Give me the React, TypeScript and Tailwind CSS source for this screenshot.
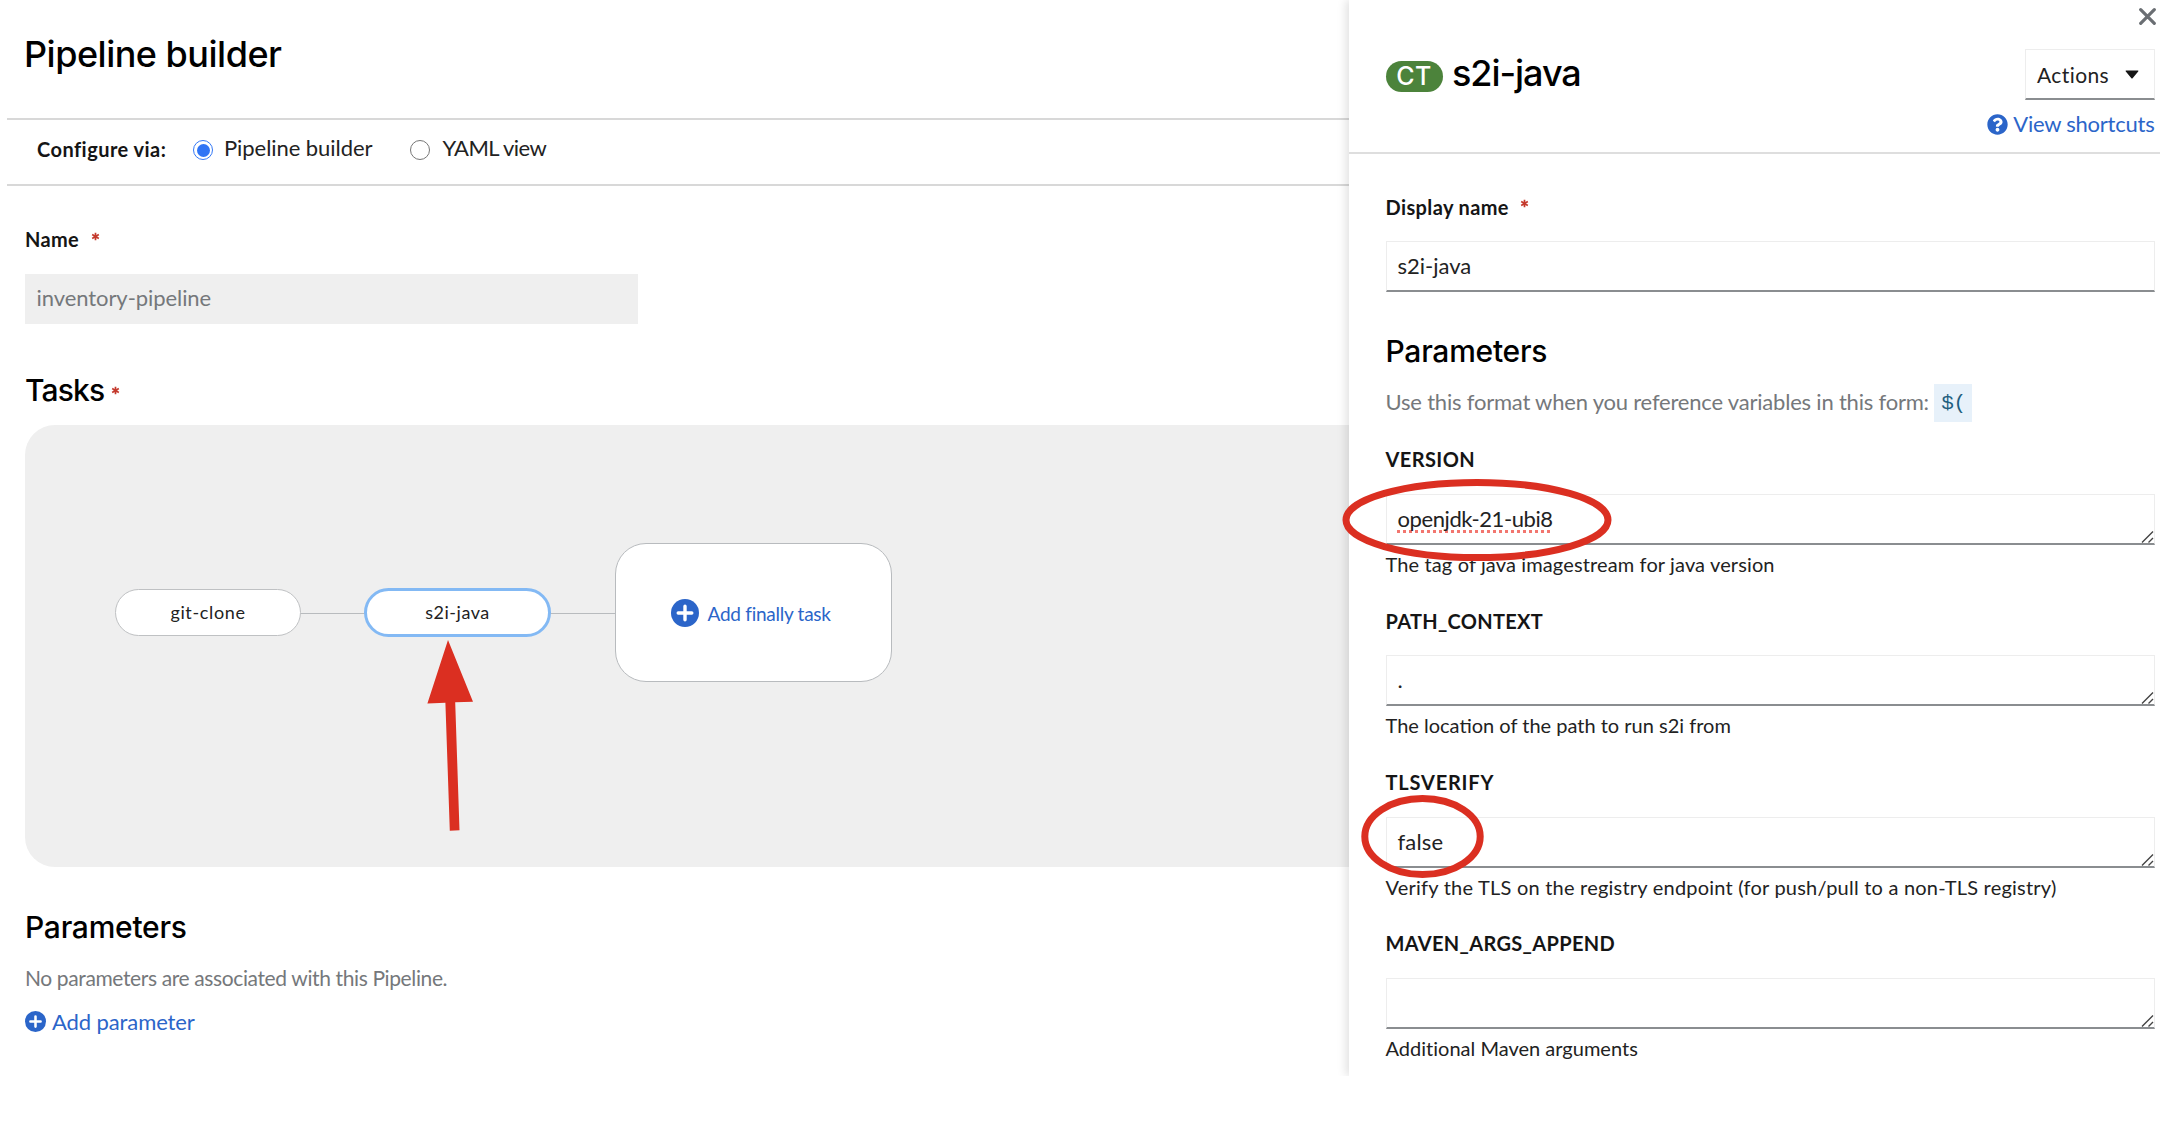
import React from 'react';

const PlusCircle = ({ className }: { className: string }) => (
  <svg viewBox="0 0 28 28" className={className}>
    <circle cx="14" cy="14" r="14" fill="#2b65c9" />
    <path d="M14 7.2v13.6M7.2 14h13.6" stroke="#fff" strokeWidth="3.4" strokeLinecap="round" />
  </svg>
);

const QuestionCircle = ({ className }: { className: string }) => (
  <svg viewBox="0 0 512 512" className={className}>
    <path
      fill="#2b65c9"
      d="M504 256c0 136.997-111.043 248-248 248S8 392.997 8 256C8 119.083 119.043 8 256 8s248 111.083 248 248zM262.655 90c-54.497 0-89.255 22.957-116.549 63.758-3.536 5.286-2.353 12.415 2.715 16.258l34.699 26.31c5.205 3.947 12.621 3.008 16.665-2.122 17.864-22.658 30.113-35.797 57.303-35.797 20.429 0 45.698 13.148 45.698 32.958 0 14.976-12.363 22.667-32.534 33.976C247.128 238.528 216 254.941 216 296v4c0 6.627 5.373 12 12 12h56c6.627 0 12-5.373 12-12v-1.333c0-28.462 83.186-29.647 83.186-106.667 0-58.002-60.165-102-116.531-102zM256 338c-25.365 0-46 20.635-46 46 0 25.364 20.635 46 46 46s46-20.636 46-46c0-25.365-20.635-46-46-46z"
    />
  </svg>
);

const Required = ({ className }: { className: string }) => (
  <svg viewBox="0 0 10 10" className={className}>
    <path d="M5 0.8v8.4M1.3 2.9l7.4 4.2M8.7 2.9l-7.4 4.2" stroke="#c4392c" strokeWidth="1.9" />
  </svg>
);

const ResizeHandle = () => (
  <svg viewBox="0 0 13 13" className="absolute right-0 bottom-0 h-[13px] w-[13px]">
    <path d="M1 12.5L12 1.5M7.5 12.5L12 8" stroke="#444" strokeWidth="1.4" />
  </svg>
);

type FieldProps = {
  label: string;
  labelClass: string;
  value: React.ReactNode;
  help: string;
  helpClass: string;
};

const Field = ({ label, labelClass, value, help, helpClass }: FieldProps) => (
  <div className="h-[161.33px]">
    <div className={`text-[20px] leading-6 font-bold text-[#151515] ${labelClass}`}>{label}</div>
    <div className="relative mt-[22.5px] flex h-[51px] items-center border border-b-2 border-[#ededed] border-b-[#8a8d90] pl-[11px] text-[22px] leading-7 text-[#222]">
      {value}
      <ResizeHandle />
    </div>
    <div className={`mt-[7px] text-[20px] leading-6 text-[#222] ${helpClass}`}>{help}</div>
  </div>
);

export default function App() {
  return (
    <div className="relative flex h-[1142px] w-[2160px] items-start overflow-hidden bg-white font-['Lato',sans-serif] whitespace-nowrap text-[#222]">
      <main className="flex h-[1076px] w-[1349px] flex-col pl-[6.5px]">
        <header className="h-[120px] border-b-2 border-[#d8d8d8] pt-[34px] pl-[17.5px]">
          <h1 className="font-['Inter',sans-serif] text-[36px] leading-10 font-medium tracking-[-0.5px] text-black">
            Pipeline builder
          </h1>
        </header>
        <div className="flex h-[66px] items-start border-b-2 border-[#d8d8d8] pt-[14px] pl-[30.5px]">
          <span className="mt-[1px] w-[156px] text-[20px] leading-7 font-bold tracking-[0.46px] text-[#151515]">
            Configure via:
          </span>
          <span className="mt-[6px] flex h-5 w-5 items-center justify-center rounded-full border-[1.5px] border-[#3478f6] bg-white">
            <span className="h-[13px] w-[13px] rounded-full bg-[#2f74f5]" />
          </span>
          <span className="ml-[11px] text-[22px] leading-7 tracking-[-0.06px]">Pipeline builder</span>
          <span className="mt-[6px] ml-[37.5px] h-5 w-5 rounded-full border-[1.5px] border-[#767676] bg-white" />
          <span className="ml-[12.5px] text-[22px] leading-7 tracking-[-0.55px]">YAML view</span>
        </div>

        <div className="pl-[18.5px]">
          <div className="mt-[41px] flex h-6">
            <span className="text-[20px] leading-6 font-bold tracking-[0.32px] text-[#151515]">Name</span>
            <Required className="mt-[4.5px] ml-[11.5px] h-[9px] w-[9px]" />
          </div>
          <div className="mt-[22.5px] flex h-[50px] w-[613px] items-center bg-[#efefef] pl-[11.5px] text-[22px] leading-7 tracking-[-0.07px] text-[#75787b]">
            <span className="-mt-[1px]">inventory-pipeline</span>
          </div>

          <div className="mt-[48.5px] flex h-9">
            <h2 className="font-['Inter',sans-serif] text-[30px] leading-9 font-medium tracking-[-0.84px] text-black">
              Tasks
            </h2>
            <Required className="mt-[14px] ml-[6.5px] h-[9px] w-[9px]" />
          </div>

          <div className="relative mt-[17px] h-[442px] rounded-l-[30px] bg-[#efefef]">
            <div className="absolute top-[187.5px] left-[275px] h-[1.5px] w-[66px] bg-[#b8bbbe]" />
            <div className="absolute top-[187.5px] left-[525px] h-[1.5px] w-[66px] bg-[#b8bbbe]" />
            <div className="absolute top-[164px] left-[90px] flex h-[47px] w-[186px] items-center justify-center rounded-full border-[1.5px] border-[#bfc1c3] bg-white pb-[1px] text-[18px] tracking-[0.64px]">
              git-clone
            </div>
            <div className="absolute top-[163px] left-[339px] flex h-[49px] w-[187px] items-center justify-center rounded-full border-[3px] border-[#83b9f4] bg-white pb-[1px] text-[18px] tracking-[0.51px]">
              s2i-java
            </div>
            <div className="absolute top-[118px] left-[590px] flex h-[139px] w-[277px] items-center justify-start rounded-[31px] border-[1.5px] border-[#b8bbbe] bg-white pl-[54.5px]">
              <PlusCircle className="h-7 w-7" />
              <span className="mt-[3px] ml-[9px] text-[19px] leading-6 tracking-[-0.26px] text-[#2b65c9]">
                Add finally task
              </span>
            </div>
          </div>

          <h2 className="mt-[42px] font-['Inter',sans-serif] text-[30px] leading-9 font-medium tracking-[-0.25px] text-black">
            Parameters
          </h2>
          <p className="mt-[19px] text-[21px] leading-7 tracking-[-0.38px] text-[#75787b]">
            No parameters are associated with this Pipeline.
          </p>
          <div className="mt-[16px] flex h-7 items-center text-[#2b65c9]">
            <PlusCircle className="mb-[2px] h-[21px] w-[21px]" />
            <span className="ml-[6px] text-[22px] leading-7 tracking-[-0.1px]">Add parameter</span>
          </div>
        </div>
      </main>

      <aside className="h-[1076px] w-[811px] bg-white shadow-[-3px_0_9px_rgba(0,0,0,0.12)] [clip-path:inset(0_0_0_-20px)]">
        <div className="flex h-[154px] justify-between border-b-2 border-[#dedede] pr-[5.5px] pl-[36.5px]">
          <div className="mt-[53px] flex items-start">
            <span className="mt-[8px] flex h-[31px] w-[57px] items-center justify-center rounded-full bg-[#4c833b] font-['Inter',sans-serif] text-[25px] leading-[31px] font-medium tracking-[0.4px] text-white">
              CT
            </span>
            <span className="ml-[9.5px] font-['Inter',sans-serif] text-[36px] leading-10 font-medium tracking-[-1.05px] text-black">
              s2i-java
            </span>
          </div>
          <div className="flex flex-col items-end">
            <svg viewBox="0 0 17 17" className="mt-[8px] -mr-[1px] h-[17px] w-[17px]">
              <path d="M1.7 1.7l13.6 13.6M15.3 1.7L1.7 15.3" stroke="#6a6e73" strokeWidth="3.2" strokeLinecap="round" />
            </svg>
            <div className="mt-[24px] flex h-[51px] w-[130px] items-center border border-b-2 border-[#ededed] border-b-[#8a8d90] pl-[11.5px]">
              <span className="mt-[1px] text-[21px] leading-7 tracking-[0.41px]">Actions</span>
              <svg viewBox="0 0 14 9" className="mt-[1px] ml-[15.5px] h-[9px] w-[14px]">
                <path d="M1.2 0.5h11.6a0.5 0.5 0 0 1 .4.9L7.6 8.2a.8.8 0 0 1-1.2 0L.8 1.4a.5.5 0 0 1 .4-.9z" fill="#151515" />
              </svg>
            </div>
            <div className="mt-[10px] flex items-center text-[#2b65c9]">
              <QuestionCircle className="h-[21px] w-[21px]" />
              <span className="ml-[5px] text-[22px] leading-7 tracking-[-0.23px]">View shortcuts</span>
            </div>
          </div>
        </div>

        <div className="pr-[5.5px] pl-[36.5px]">
          <div className="mt-[40.5px] flex h-6">
            <span className="text-[20px] leading-6 font-bold tracking-[0.38px] text-[#151515]">Display name</span>
            <Required className="mt-[4.5px] ml-[11px] h-[9px] w-[9px]" />
          </div>
          <div className="mt-[22.4px] flex h-[51px] items-center border border-b-2 border-[#ededed] border-b-[#8a8d90] pl-[11px] text-[22px] leading-7">
            s2i-java
          </div>
          <h2 className="mt-[41px] font-['Inter',sans-serif] text-[30px] leading-9 font-medium tracking-[-0.25px] text-black">
            Parameters
          </h2>
          <div className="mt-[15.1px] flex h-[38px] items-center text-[22px] leading-7 tracking-[-0.2px] text-[#75787b]">
            <span className="-mt-[1px]">Use this format when you reference variables in this form:</span>
            <span className="ml-[5.5px] flex h-[38px] w-[38px] items-center justify-center bg-[#e7f1fa] pt-[2px] font-['Liberation_Mono',monospace] text-[21px] tracking-[-0.4px] text-[#1f5f80]">
              $(
            </span>
          </div>
          <div className="mt-[25.4px]">
            <Field
              label="VERSION"
              labelClass="tracking-[0.4px]"
              value={
                <span className="tracking-[-0.42px] underline decoration-[#f2766f] decoration-dotted decoration-[2.5px] underline-offset-[3px] [text-decoration-skip-ink:none]">
                  openjdk-21-ubi8
                </span>
              }
              help="The tag of java imagestream for java version"
              helpClass="tracking-[0.13px]"
            />
            <Field
              label="PATH_CONTEXT"
              labelClass="tracking-[0.3px]"
              value="."
              help="The location of the path to run s2i from"
              helpClass="tracking-[0px]"
            />
            <Field
              label="TLSVERIFY"
              labelClass="tracking-[0.8px]"
              value={<span className="tracking-[0.18px]">false</span>}
              help="Verify the TLS on the registry endpoint (for push/pull to a non-TLS registry)"
              helpClass="tracking-[0.22px]"
            />
            <Field
              label="MAVEN_ARGS_APPEND"
              labelClass="tracking-[0.33px]"
              value=""
              help="Additional Maven arguments"
              helpClass="tracking-[0.01px]"
            />
          </div>
        </div>
      </aside>

      {/* Hand-placed callouts over the page */}
      <svg viewBox="0 0 2160 1142" className="pointer-events-none absolute inset-0 h-[1142px] w-[2160px]">
        <path d="M448 640L473 701.7L455.2 702.2L459.5 830.2L449.8 830.7L445.4 702.8L427.4 703.5Z" fill="#db2f21" />
        <ellipse cx="1477" cy="520" rx="131" ry="37.5" fill="none" stroke="#db2f21" strokeWidth="7" />
        <ellipse cx="1422.5" cy="836.5" rx="57.7" ry="38" fill="none" stroke="#db2f21" strokeWidth="7" />
      </svg>
    </div>
  );
}
